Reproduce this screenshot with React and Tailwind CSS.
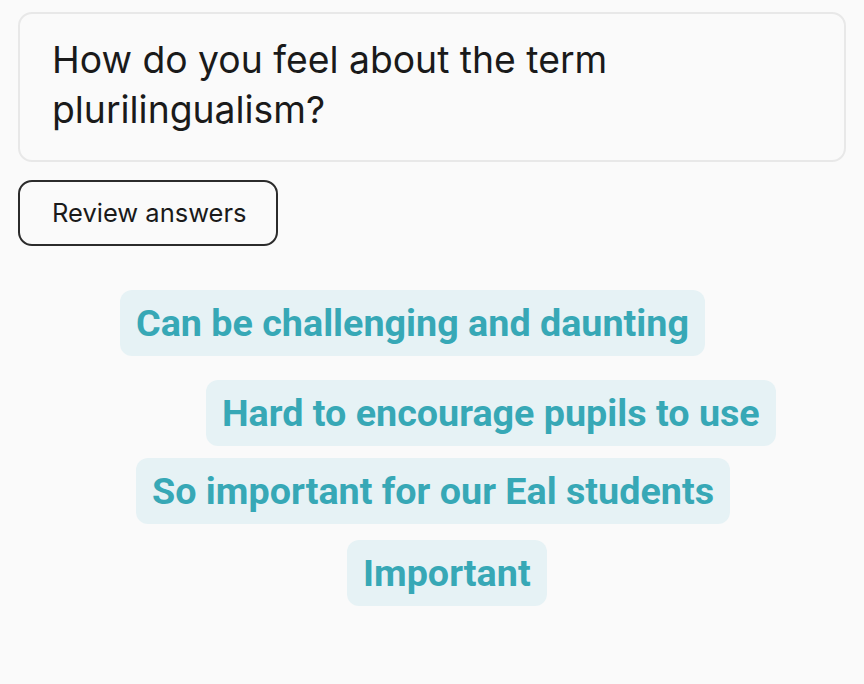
const answers = [
  { text: "Can be challenging and daunting", offset: "ml-[120px]", gap: "mt-[44px]" },
  { text: "Hard to encourage pupils to use", offset: "ml-[206px]", gap: "mt-[24px]" },
  { text: "So important for our Eal students", offset: "ml-[136px]", gap: "mt-[12px]" },
  { text: "Important", offset: "ml-[347px]", gap: "mt-[16px]" },
];

const App = () => {
  return (
    <div className="min-h-screen w-full bg-[#fafafa] px-[18px] pt-[12px] font-['Inter',sans-serif]">
      <div className="rounded-[14px] border-2 border-[#e8e8e8] px-[32px] pt-[21px] pb-[25px]">
        <h1 className="text-[37.3px] leading-[50px] text-[#1a1a1a]">
          How do you feel about the term
          <br />
          plurilingualism?
        </h1>
      </div>

      <button className="mt-[18px] h-[66px] w-[260px] rounded-[14px] border-2 border-[#2b2b2b] pl-[32px] text-left text-[25.5px] text-[#1a1a1a]">
        Review answers
      </button>

      <div className="-ml-[18px] flex flex-col items-start">
        {answers.map((a) => (
          <div
            key={a.text}
            className={`${a.offset} ${a.gap} flex h-[66px] items-center rounded-[12px] bg-[#e6f2f5] px-[16px] font-['Roboto',sans-serif] text-[37.7px] font-bold text-[#37a8b6]`}
          >
            {a.text}
          </div>
        ))}
      </div>
    </div>
  );
};

export default App;
